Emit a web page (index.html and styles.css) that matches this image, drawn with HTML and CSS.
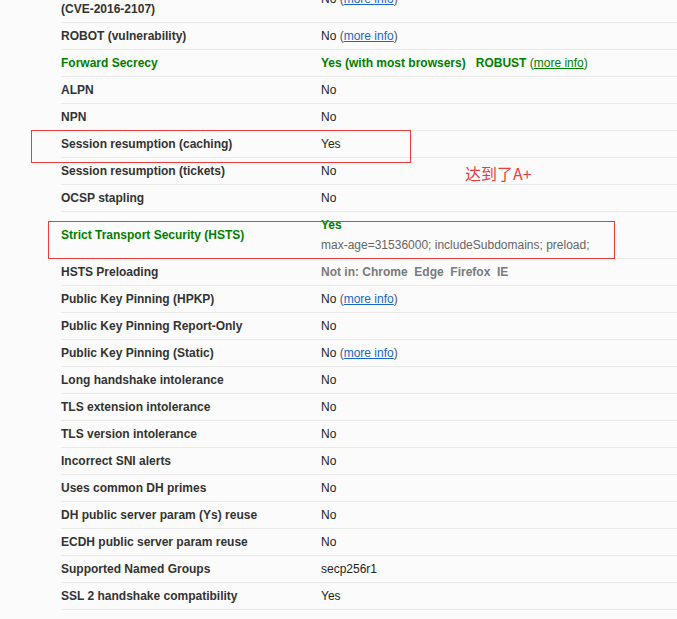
FILE: index.html
```html
<!DOCTYPE html>
<html lang="en">
<head>
<meta charset="utf-8">
<title>SSL Report - Protocol Details</title>
<link rel="stylesheet" href="styles.css">
</head>
<body>
<div class="page">
  <table class="details">
    <tbody>
      <tr class="first">
        <td class="label"><span class="line-one">OpenSSL Padding Oracle vuln.</span>(CVE-2016-2107)</td>
        <td class="value top">No <span class="paren">(<a href="#">more info</a>)</span></td>
      </tr>
      <tr>
        <td class="label">ROBOT (vulnerability)</td>
        <td class="value">No <span class="paren">(<a href="#">more info</a>)</span></td>
      </tr>
      <tr>
        <td class="label good">Forward Secrecy</td>
        <td class="value good"><b>Yes (with most browsers)</b>&nbsp;&nbsp; <b>ROBUST</b> (<a class="good-link" href="#">more info</a>)</td>
      </tr>
      <tr>
        <td class="label">ALPN</td>
        <td class="value">No</td>
      </tr>
      <tr>
        <td class="label">NPN</td>
        <td class="value">No</td>
      </tr>
      <tr>
        <td class="label">Session resumption (caching)</td>
        <td class="value">Yes</td>
      </tr>
      <tr>
        <td class="label">Session resumption (tickets)</td>
        <td class="value">No</td>
      </tr>
      <tr>
        <td class="label">OCSP stapling</td>
        <td class="value">No</td>
      </tr>
      <tr>
        <td class="label good">Strict Transport Security (HSTS)</td>
        <td class="value top">
          <div class="good"><b>Yes</b></div>
          <div class="policy">max-age=31536000; includeSubdomains; preload;</div>
        </td>
      </tr>
      <tr>
        <td class="label">HSTS Preloading</td>
        <td class="value muted"><b>Not in: Chrome&nbsp; Edge&nbsp; Firefox&nbsp; IE</b></td>
      </tr>
      <tr>
        <td class="label">Public Key Pinning (HPKP)</td>
        <td class="value">No <span class="paren">(<a href="#">more info</a>)</span></td>
      </tr>
      <tr>
        <td class="label">Public Key Pinning Report-Only</td>
        <td class="value">No</td>
      </tr>
      <tr>
        <td class="label">Public Key Pinning (Static)</td>
        <td class="value">No <span class="paren">(<a href="#">more info</a>)</span></td>
      </tr>
      <tr>
        <td class="label">Long handshake intolerance</td>
        <td class="value">No</td>
      </tr>
      <tr>
        <td class="label">TLS extension intolerance</td>
        <td class="value">No</td>
      </tr>
      <tr>
        <td class="label">TLS version intolerance</td>
        <td class="value">No</td>
      </tr>
      <tr>
        <td class="label">Incorrect SNI alerts</td>
        <td class="value">No</td>
      </tr>
      <tr>
        <td class="label">Uses common DH primes</td>
        <td class="value">No</td>
      </tr>
      <tr>
        <td class="label">DH public server param (Ys) reuse</td>
        <td class="value">No</td>
      </tr>
      <tr>
        <td class="label">ECDH public server param reuse</td>
        <td class="value">No</td>
      </tr>
      <tr>
        <td class="label">Supported Named Groups</td>
        <td class="value">secp256r1</td>
      </tr>
      <tr>
        <td class="label">SSL 2 handshake compatibility</td>
        <td class="value">Yes</td>
      </tr>
    </tbody>
  </table>

  <div class="mark mark-caching"></div>
  <div class="mark mark-hsts"></div>
  <div class="note">达到了A+</div>
</div>
</body>
</html>
```

FILE: styles.css
```css
html, body {
  margin: 0;
  padding: 0;
  background: #fbfbfb;
  overflow: hidden;
}

.page {
  position: relative;
  display: flow-root;
  min-height: 619px;
  font-family: "Liberation Sans", Arial, sans-serif;
  font-size: 12px;
  line-height: 14px;
  color: #333;
}

.details {
  margin: -23px 0 0 61px;
  width: calc(100% - 61px);
  border-collapse: collapse;
  border-spacing: 0;
}

.details td {
  padding: 6px 0;
  border-bottom: 1px solid #e9e9e9;
  vertical-align: middle;
}

.details .label {
  width: 260px;
  font-weight: bold;
  color: #333;
}

.line-one {
  display: block;
  margin-bottom: 5px;
}

.details .value {
  color: #222;
}

.details .value.top {
  vertical-align: top;
}

.details .first .value.top {
  padding-top: 15px;
}

.good {
  color: #008000;
}

.details .label.good {
  color: #008000;
}

.details .value.good {
  color: #008000;
}

.paren {
  color: #555;
}

a {
  color: #1a66cc;
  text-decoration: underline;
}

a.good-link {
  color: #008000;
}

.policy {
  margin-top: 6px;
  color: #666;
}

.details .value.muted {
  color: #7a7a7a;
}

.mark {
  position: absolute;
  border: 1px solid #f03b3b;
  box-sizing: border-box;
}

.mark-caching {
  left: 31px;
  top: 130px;
  width: 380px;
  height: 33px;
}

.mark-hsts {
  left: 48px;
  top: 221px;
  width: 567px;
  height: 38px;
}

.note {
  position: absolute;
  left: 465px;
  top: 163px;
  font-family: "Noto Sans CJK SC", "Liberation Sans", sans-serif;
  font-size: 16px;
  line-height: 20px;
  color: #f03b3b;
}
```
